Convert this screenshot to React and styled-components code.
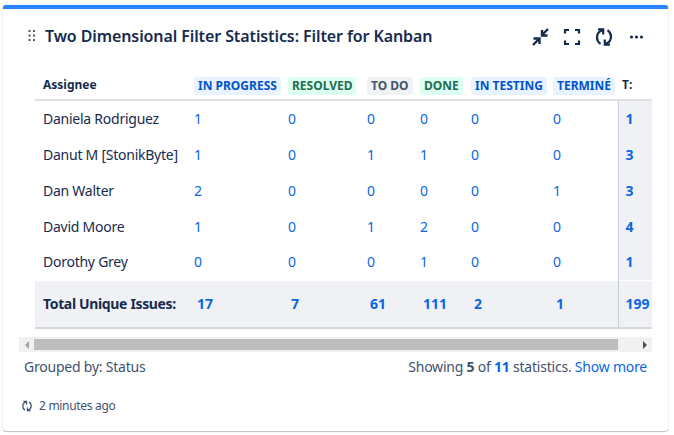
import React from 'react';
import styled, { createGlobalStyle } from 'styled-components';

const GlobalStyle = createGlobalStyle`
  html, body {
    margin: 0;
    padding: 0;
    background: #fff;
    font-family: "Noto Sans", "Open Sans", sans-serif;
  }
`;

const Page = styled.div`
  padding: 5px 6px 4px 3px;
  width: 674px;
  height: 435px;
  box-sizing: border-box;
`;

const Card = styled.section`
  height: 426px;
  box-sizing: border-box;
  border-top: 4px solid #2684ff;
  border-radius: 3px;
  background: #fff;
  box-shadow: 0 1px 1px rgba(9, 30, 66, 0.25), 0 0 1px rgba(9, 30, 66, 0.31);
  padding: 0 16px;
  color: #172b4d;
`;

const Header = styled.header`
  height: 54px;
  padding-left: 9px;
  display: flex;
  align-items: center;
`;

const Title = styled.h2`
  margin: 0 0 0 9px;
  font-size: 16px;
  font-weight: 600;
  letter-spacing: -0.1px;
  flex: 1;
  white-space: nowrap;
`;

const Actions = styled.div`
  display: flex;
  gap: 12px;
  margin: 2px 6px 0 0;
`;

const IconBtn = styled.span`
  display: flex;
  width: 20px;
  height: 20px;
  color: #172b4d;
`;

const TableWrap = styled.div`
  margin: 9px 0 0 16px;
  width: 617px;
  overflow: hidden;
`;

const Table = styled.table`
  width: 617px;
  table-layout: fixed;
  border-collapse: collapse;
  font-size: 14px;
`;

const HeadRow = styled.tr`
  height: 28px;
  border-bottom: 2px solid #dfe1e6;
`;

const Th = styled.th`
  padding: 0 0 ${(p) => (p.$lift ? 2 : 0)}px ${(p) => p.$pad || 0}px;
  text-align: left;
  font-size: 12px;
  font-weight: 700;
  white-space: nowrap;
`;

const Pill = styled.span`
  display: inline-block;
  height: 18px;
  line-height: 18px;
  padding: 0 4px;
  border-radius: 3px;
  font-size: 12px;
  font-weight: 700;
  color: ${(p) => (p.$kind === 'done' ? '#216e4e' : p.$kind === 'todo' ? '#44546f' : '#0055cc')};
  background: ${(p) => (p.$kind === 'done' ? '#dcfff1' : p.$kind === 'todo' ? '#f1f2f4' : '#e9f2ff')};
`;

const Row = styled.tr`
  height: 36px;
`;

const NameCell = styled.td`
  padding: 0 0 0 8px;
  white-space: nowrap;
  letter-spacing: -0.25px;
  color: #172b4d;
`;

const Num = styled.td`
  padding: 0;
  color: #0c66e4;
`;

const SumCell = styled.td`
  padding: 0 0 0 7px;
  border-left: 1px solid #c9ccd6;
  background: #f0f1f5;
  color: #0c66e4;
  font-weight: 700;
`;

const TotalRow = styled.tr`
  height: 48px;
  background: #f0f1f5;
  border-top: 1px solid #fff;
  border-bottom: 2px solid #d5d7e0;
  font-weight: 700;
`;

const TotalLabel = styled.td`
  padding: 0 0 0 8px;
  color: #172b4d;
  letter-spacing: -0.35px;
  white-space: nowrap;
`;

const TotalNum = styled.td`
  padding: 0 0 0 3px;
  color: #0c66e4;
`;

const Scrollbar = styled.div`
  margin-top: 8px;
  width: 633px;
  height: 15px;
  background: #f1f1f1;
  display: flex;
  align-items: center;
`;

const ScrollArrow = styled.span`
  width: 15px;
  display: flex;
  justify-content: center;
  &::before {
    content: '';
    border-style: solid;
    border-width: 4px 0 4px 4px;
    border-color: transparent transparent transparent ${(p) => (p.$dir === 'left' ? '#a3a3a3' : '#505050')};
    transform: ${(p) => (p.$dir === 'left' ? 'rotate(180deg)' : 'none')};
  }
`;

const ScrollThumb = styled.span`
  flex: 0 0 584px;
  height: 11px;
  background: #bdbdbd;
`;

const ScrollGap = styled.span`
  flex: 1;
`;

const Summary = styled.div`
  width: 633px;
  display: flex;
  justify-content: space-between;
  padding: 0 5px;
  box-sizing: border-box;
  margin-top: 5px;
  font-size: 14px;
  line-height: 20px;
  letter-spacing: -0.22px;
  color: #42526e;
`;

const Strong = styled.b`
  font-weight: 700;
  color: ${(p) => (p.$blue ? '#0c66e4' : '#42526e')};
`;

const ShowMore = styled.span`
  color: #0c66e4;
`;

const Updated = styled.div`
  margin: 21px 0 0 2px;
  display: flex;
  align-items: center;
  gap: 6px;
  font-size: 12px;
  line-height: 16px;
  letter-spacing: -0.3px;
  color: #42526e;
`;

const Grip = () => (
  <svg width="8" height="12" viewBox="0 0 8 12" fill="#42526e">
    {[1, 5.5, 10].map((y) => [1.5, 6].map((x) => <rect key={`${x}-${y}`} x={x - 1} y={y - 1} width="2" height="2" rx="0.5" />))}
  </svg>
);

const Collapse = () => (
  <svg width="20" height="20" viewBox="0 0 20 20" fill="none" stroke="currentColor" strokeWidth="2.4">
    <path d="M18 2l-6 6M12 3v5.500h5.500" />
    <path d="M3 18l6-6M3.500 11.500H9.500V17" />
  </svg>
);

const Expand = () => (
  <svg width="20" height="20" viewBox="0 0 20 20" fill="none" stroke="currentColor" strokeWidth="2.2">
    <path d="M3 6.500V3h4M13 3h4v3.500M17 13.500V17h-4M7 17H3v-3.500" />
  </svg>
);

const Refresh = ({ size = 20 }) => (
  <svg width={size} height={size} viewBox="0 0 20 20" fill="none" stroke="currentColor" strokeWidth="2.2">
    <path d="M6.500 16.800C4.300 15.300 3 13 3 10.500 3 7 5 4.200 8.500 3.200" />
    <path d="M13.500 3.200C15.700 4.700 17 7 17 9.500c0 3.500-2 6.300-5.500 7.300" />
    <path d="M4 2.400h5.200v5M16 17.600h-5.200v-5" />
  </svg>
);

const More = () => (
  <svg width="20" height="20" viewBox="0 0 20 20" fill="currentColor">
    <circle cx="5.500" cy="10" r="1.600" />
    <circle cx="10.500" cy="10" r="1.600" />
    <circle cx="15.500" cy="10" r="1.600" />
  </svg>
);

const columns = [
  { label: 'IN PROGRESS', kind: 'progress' },
  { label: 'RESOLVED', kind: 'done' },
  { label: 'TO DO', kind: 'todo' },
  { label: 'DONE', kind: 'done' },
  { label: 'IN TESTING', kind: 'progress' },
  { label: 'TERMINÉ', kind: 'progress' },
];

const widths = [159, 94, 79, 53, 51, 82, 65, 34];

const rows = [
  { name: 'Daniela Rodriguez', values: [1, 0, 0, 0, 0, 0], sum: 1 },
  { name: 'Danut M [StonikByte]', values: [1, 0, 1, 1, 0, 0], sum: 3 },
  { name: 'Dan Walter', values: [2, 0, 0, 0, 0, 1], sum: 3 },
  { name: 'David Moore', values: [1, 0, 1, 2, 0, 0], sum: 4 },
  { name: 'Dorothy Grey', values: [0, 0, 0, 1, 0, 0], sum: 1 },
];

const totals = [17, 7, 61, 111, 2, 1];

const App = () => (
  <Page>
    <GlobalStyle />
    <Card>
      <Header>
        <Grip />
        <Title>Two Dimensional Filter Statistics: Filter for Kanban</Title>
        <Actions>
          <IconBtn><Collapse /></IconBtn>
          <IconBtn><Expand /></IconBtn>
          <IconBtn><Refresh /></IconBtn>
          <IconBtn><More /></IconBtn>
        </Actions>
      </Header>
      <TableWrap>
        <Table>
          <colgroup>
            {widths.map((w, i) => <col key={i} style={{ width: w }} />)}
          </colgroup>
          <thead>
            <HeadRow>
              <Th $pad={8} $lift>Assignee</Th>
              {columns.map((c) => (
                <Th key={c.label}><Pill $kind={c.kind}>{c.label}</Pill></Th>
              ))}
              <Th $pad={4} $lift>T:</Th>
            </HeadRow>
          </thead>
          <tbody>
            {rows.map((r) => (
              <Row key={r.name}>
                <NameCell>{r.name}</NameCell>
                {r.values.map((v, i) => <Num key={i}>{v}</Num>)}
                <SumCell>{r.sum}</SumCell>
              </Row>
            ))}
            <TotalRow>
              <TotalLabel>Total Unique Issues:</TotalLabel>
              {totals.map((v, i) => <TotalNum key={i}>{v}</TotalNum>)}
              <SumCell>199</SumCell>
            </TotalRow>
          </tbody>
        </Table>
      </TableWrap>
      <Scrollbar>
        <ScrollArrow $dir="left" />
        <ScrollThumb />
        <ScrollGap />
        <ScrollArrow $dir="right" />
      </Scrollbar>
      <Summary>
        <span>Grouped by: Status</span>
        <span>
          Showing <Strong>5</Strong> of <Strong $blue>11</Strong> statistics. <ShowMore>Show more</ShowMore>
        </span>
      </Summary>
      <Updated>
        <Refresh size={12} />
        <span>2 minutes ago</span>
      </Updated>
    </Card>
  </Page>
);

export default App;
